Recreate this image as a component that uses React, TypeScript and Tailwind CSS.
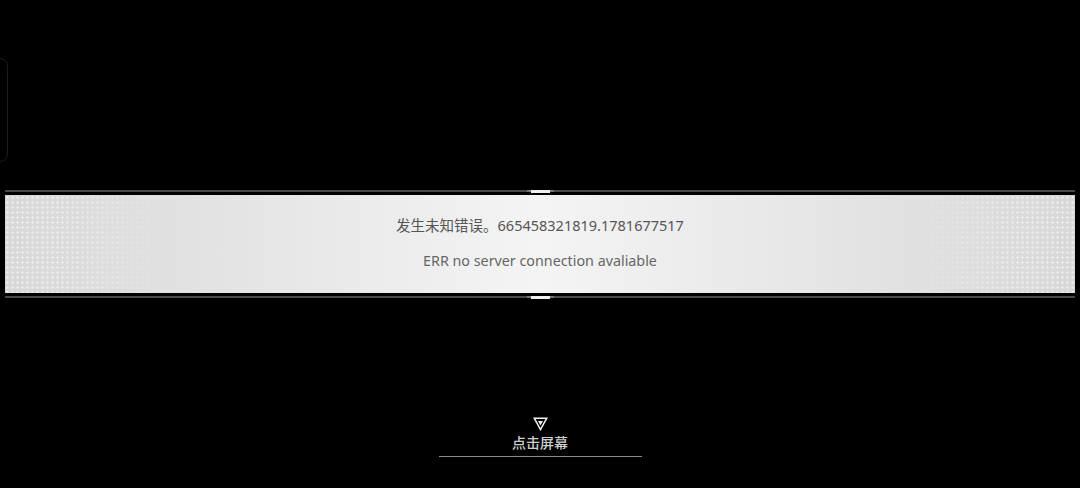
const font = { fontFamily: '"Noto Sans", "Noto Sans CJK SC", sans-serif' };

const Dots = ({ side }: { side: "left" | "right" }) => (
  <div
    className={
      "w-[170px] h-full bg-[radial-gradient(circle,#ececec_1px,transparent_1.3px)] bg-[length:5px_5px] " +
      (side === "left"
        ? "[mask-image:linear-gradient(to_right,black_30%,transparent)]"
        : "[mask-image:linear-gradient(to_left,black_30%,transparent)]")
    }
  />
);

const Rule = () => (
  <div className="mx-[5px] h-[2px] bg-[#4a4a4a] flex justify-center items-center">
    <div className="w-[27px] h-[2px] bg-[#777] flex justify-center">
      <div className="w-[19px] h-[3px] bg-[#f0f0f0]" />
    </div>
  </div>
);

export default function App() {
  return (
    <div className="w-[1080px] h-[488px] bg-black overflow-hidden flex flex-col" style={font}>
      {/* stray panel edge on the left */}
      <div className="mt-[58px] -ml-[32px] w-[40px] h-[104px] rounded-[8px] border border-[#1d1d1d]" />

      <div className="mt-[28px]">
        <Rule />
        <div className="mx-[5px] mt-[3px] h-[98px] flex bg-[linear-gradient(to_right,#d8d8d8,#e6e6e6_25%,#f4f4f4_50%,#e6e6e6_75%,#d8d8d8)]">
          <Dots side="left" />
          <div className="flex-1 flex flex-col items-center pt-[19px]">
            <p className="text-[14.5px] leading-[22px] text-[#555]">发生未知错误。665458321819.1781677517</p>
            <p className="mt-[15px] text-[14.3px] leading-[20px] text-[#666]">ERR no server connection avaliable</p>
          </div>
          <Dots side="right" />
        </div>
        <div className="mt-[3px]">
          <Rule />
        </div>
      </div>

      <div className="mt-[119px] flex flex-col items-center">
        <svg width="15" height="14" viewBox="0 0 15 14" className="ml-[1px]">
          <path d="M1.2 1.2 H13.8 L7.5 12.6 Z" fill="none" stroke="#f2f2f2" strokeWidth="1.5" strokeLinejoin="miter" />
          <path d="M5 4 H10 L7.5 8.5 Z" fill="#f2f2f2" />
        </svg>
        <p className="mt-[3px] text-[14px] leading-[18px] font-medium text-[#cfcfcf]">点击屏幕</p>
        <div className="mt-[4px] w-[203px] h-px bg-[#8a8a8a]" />
      </div>
    </div>
  );
}
